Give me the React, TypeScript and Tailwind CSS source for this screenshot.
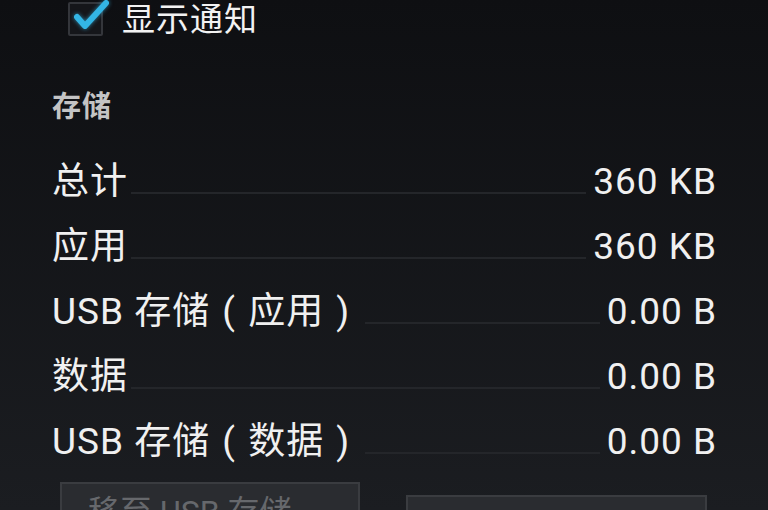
import React from "react";

const font = { fontFamily: "Roboto, 'Noto Sans CJK SC', 'Noto Sans', sans-serif" };

type Row = { label: React.ReactNode; key: string; value: string };

function Paren({ ch }: { ch: string }) {
  return <span className="inline-block w-[38px] text-center">{ch}</span>;
}

const rows: Row[] = [
  { key: "total", label: "总计", value: "360 KB" },
  { key: "app", label: "应用", value: "360 KB" },
  {
    key: "usb-app",
    label: (
      <>
        USB 存储<Paren ch="(" />应用<Paren ch=")" />
      </>
    ),
    value: "0.00 B",
  },
  { key: "data", label: "数据", value: "0.00 B" },
  {
    key: "usb-data",
    label: (
      <>
        USB 存储<Paren ch="(" />数据<Paren ch=")" />
      </>
    ),
    value: "0.00 B",
  },
];

function CheckBox() {
  return (
    <div className="relative h-[34px] w-[35px] rounded-[2px] border-2 border-[#34363b] bg-[#15161a]">
      <svg className="absolute -left-[2px] -top-[4px] overflow-visible" width="42" height="38" viewBox="0 0 42 38">
        <path
          d="M9 17 L17 26 L38 3"
          fill="none"
          stroke="#33b5e5"
          strokeWidth="6"
          strokeLinecap="round"
          strokeLinejoin="round"
          style={{ filter: "drop-shadow(0 0 2px rgba(51,181,229,0.7))" }}
        />
      </svg>
    </div>
  );
}

export default function App() {
  return (
    <div
      className="flex h-[510px] w-[768px] flex-col overflow-hidden bg-gradient-to-b from-[#0e0f12] to-[#1b1d21]"
      style={font}
    >
      <div className="flex h-[38px] items-center gap-[19px] pl-[68px] pt-[2px]">
        <CheckBox />
        <span className="text-[33px] leading-none tracking-[1px] text-[#f2f2f2]">显示通知</span>
      </div>

      <div className="mt-[54px] pl-[52px] text-[29px] font-bold leading-[34px] tracking-[1px] text-[#c4c4c4]">存储</div>
      <div className="mx-[34px] mt-[8px] h-[2px] bg-[#6e7074]" />

      <div className="mt-[17px] flex flex-col">
        {rows.map((row) => (
          <div
            key={row.key}
            className="flex h-[65px] items-center pl-[52px] pr-[51px] text-[37px] leading-none tracking-[1px] text-[#f0f0f0]"
          >
            <span className="whitespace-nowrap">{row.label}</span>
            <div className="mb-[20px] ml-[3px] mr-[7px] h-[2px] flex-1 self-end bg-[#24262a]" />
            <span className="whitespace-nowrap">{row.value}</span>
          </div>
        ))}
      </div>

      <div className="mt-[8px] flex items-start gap-[46px] pl-[60px]">
        <div className="h-[60px] w-[300px] border-2 border-[#3a3c40] bg-[#2a2c30] pl-[26px] pt-[12px] text-[32px] leading-none text-[#66686c]">
          移至 USB 存储
        </div>
        <div className="mt-[13px] h-[60px] w-[301px] border-2 border-[#3a3c40] bg-[#2a2c30]" />
      </div>
    </div>
  );
}
